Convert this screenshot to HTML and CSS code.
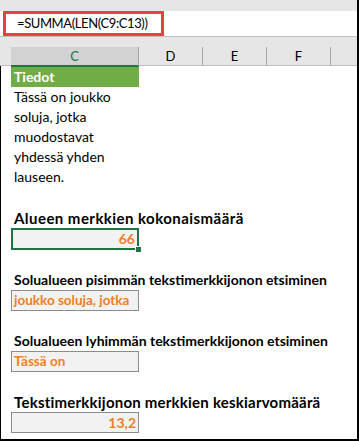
FILE: index.html
```html
<!DOCTYPE html>
<html lang="fi">
<head>
  <meta charset="UTF-8" />
  <meta name="viewport" content="width=device-width, initial-scale=1.0"/>
  <title>PITUUS-funktio</title>
  <link rel="stylesheet" href="styles.css">
</head>
<body>
  <div class="frame">
    <div class="toolbar">
      <div class="formula-bar">
        <div class="formula">=SUMMA(LEN(C9:C13))</div>
      </div>
    </div>

    <div class="col-headers">
      <div class="corner"></div>
      <div class="col col-c">C</div>
      <div class="col">D</div>
      <div class="col">E</div>
      <div class="col">F</div>
      <div class="col col-rest"></div>
    </div>

    <div class="sheet">
      <div class="data-head">Tiedot</div>
      <div class="data-text">
        Tässä on joukko<br>
        soluja, jotka<br>
        muodostavat<br>
        yhdessä yhden<br>
        lauseen.
      </div>

      <div class="label label-big first">Alueen merkkien kokonaismäärä</div>
      <div class="cell cell-num cell-active">66<span class="handle"></span></div>

      <div class="label">Solualueen pisimmän tekstimerkkijonon etsiminen</div>
      <div class="cell">joukko soluja, jotka</div>

      <div class="label">Solualueen lyhimmän tekstimerkkijonon etsiminen</div>
      <div class="cell">Tässä on</div>

      <div class="label label-big label-avg">Tekstimerkkijonon merkkien keskiarvomäärä</div>
      <div class="cell cell-num">13,2</div>
    </div>
  </div>
</body>
</html>
```

FILE: styles.css
```css
body {
  margin: 0;
  background: #fff;
  font-family: "Lato", "Open Sans", sans-serif;
}

.frame {
  width: 359px;
  height: 441px;
  box-sizing: border-box;
  border-right: 2px solid #000;
  display: flex;
  flex-direction: column;
}

/* formula area */
.toolbar {
  background: #e6e6e6;
  padding-top: 11px;
  padding-bottom: 10px;
}

.formula-bar {
  height: 25px;
  background: #fff;
  border-bottom: 1px solid #c0c0c0;
  padding-left: 3px;
  display: flex;
}

.formula {
  width: 161px;
  box-sizing: border-box;
  border: 3px solid #e2443f;
  padding-left: 11px;
  font-size: 13px;
  letter-spacing: -0.4px;
  line-height: 19px;
  color: #000;
  white-space: nowrap;
}

/* column headers */
.col-headers {
  display: flex;
  height: 18px;
  background: #e6e6e6;
  border-bottom: 1px solid #bdbdbd;
}

.corner {
  width: 11px;
}

.col {
  width: 63px;
  border-right: 1px solid #a8a8a8;
  text-align: center;
  font-size: 13px;
  line-height: 18px;
  color: #000;
}

.col-c {
  width: 127px;
  background: #d2d2d2;
  color: #217346;
  border-bottom: 2px solid #217346;
  margin-bottom: -2px;
}

.col-rest {
  flex: 1;
  border-right: none;
}

/* sheet body */
.sheet {
  flex: 1;
  border-left: 1px solid #000;
  border-bottom: 2px solid #000;
  padding: 1px 0 0 10px;
  color: #000;
}

.data-head {
  width: 128px;
  height: 20px;
  box-sizing: border-box;
  background: #70ad47;
  color: #fff;
  font-weight: bold;
  font-size: 14px;
  line-height: 20px;
  padding-left: 3px;
}

.data-text {
  font-size: 14px;
  line-height: 20px;
  padding-left: 3px;
}

.label {
  font-weight: bold;
  font-size: 14px;
  line-height: 20px;
  padding-left: 3px;
  margin-top: 20px;
  white-space: nowrap;
}

.label-big {
  font-size: 15px;
  letter-spacing: 0.45px;
}

.label-avg {
  letter-spacing: 0.22px;
}

.first {
  margin-top: 21px;
}

.cell {
  position: relative;
  width: 128px;
  height: 21px;
  box-sizing: border-box;
  background: #f2f2f2;
  border: 1px solid #8c8c8c;
  color: #f07f22;
  font-weight: bold;
  font-size: 13.5px;
  line-height: 19px;
  padding: 0 2px;
  white-space: nowrap;
}

.cell-num {
  text-align: right;
  font-size: 14px;
}

.cell-active {
  height: 22px;
  border: 2px solid #217346;
  line-height: 18px;
}

.handle {
  position: absolute;
  right: -5px;
  bottom: -5px;
  width: 5px;
  height: 5px;
  background: #217346;
  border: 1px solid #fff;
}
```
